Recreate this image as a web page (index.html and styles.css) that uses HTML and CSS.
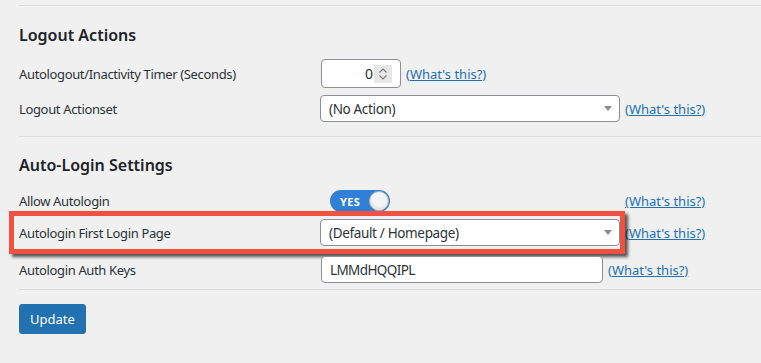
FILE: index.html
```html
<!DOCTYPE html>
<html>
<head>
<meta charset="utf-8">
<link rel="stylesheet" href="styles.css">
</head>
<body>
<div class="wrap">
  <div class="sep sep-top"></div>
  <h2 class="title t1">Logout Actions</h2>
  <div class="row r1">
    <div class="label">Autologout/Inactivity Timer (Seconds)</div>
    <div class="field">
      <div class="num">
        <span class="num-val">0</span>
        <span class="spin">
          <svg width="18" height="18" viewBox="0 0 18 18"><path d="M5.5 7.5 L9 4 L12.5 7.5" fill="none" stroke="#7a7a7a" stroke-width="1.1"/><path d="M5.5 10.5 L9 14 L12.5 10.5" fill="none" stroke="#7a7a7a" stroke-width="1.1"/></svg>
        </span>
      </div>
      <a class="help" href="#">(What's this?)</a>
    </div>
  </div>
  <div class="row r2">
    <div class="label">Logout Actionset</div>
    <div class="field">
      <div class="select">
        <span>(No Action)</span>
        <span class="caret"></span>
      </div>
      <a class="help" href="#">(What's this?)</a>
    </div>
  </div>
  <div class="sep sep-mid"></div>
  <h2 class="title t2">Auto-Login Settings</h2>
  <div class="row r3">
    <div class="label">Allow Autologin</div>
    <div class="field">
      <div class="toggle-box">
        <div class="toggle"><span class="toggle-text">YES</span><span class="knob"></span></div>
      </div>
      <a class="help" href="#">(What's this?)</a>
    </div>
  </div>
  <div class="row r4">
    <div class="label">Autologin First Login Page</div>
    <div class="field">
      <div class="select">
        <span>(Default / Homepage)</span>
        <span class="caret"></span>
      </div>
      <a class="help" href="#">(What's this?)</a>
    </div>
    <div class="highlight"></div>
  </div>
  <div class="row r5">
    <div class="label">Autologin Auth Keys</div>
    <div class="field">
      <div class="text-input">LMMdHQQIPL</div>
      <a class="help" href="#">(What's this?)</a>
    </div>
  </div>
  <div class="sep sep-bot"></div>
  <button class="btn">Update</button>
</div>
</body>
</html>
```
FILE: styles.css
```css
html, body {
  margin: 0;
  padding: 0;
  background: #f0f0f1;
}
body {
  font-family: "Noto Sans", "Open Sans", sans-serif;
  font-size: 13px;
  color: #2c3338;
  overflow: hidden;
}
.wrap {
  padding-left: 19px;
}
.sep {
  border-top: 1px solid #dcdcde;
  height: 0;
}
.sep-top { margin-top: 5px; }
.sep-mid { margin-top: 14px; }
.sep-bot { margin-top: 6px; }
.title {
  margin: 0;
  font-size: 16px;
  font-weight: 600;
  line-height: 22px;
  height: 22px;
  color: #1d2327;
}
.t1 { margin-top: 18px; }
.t2 { margin-top: 17px; }
.row {
  display: flex;
  align-items: center;
  position: relative;
}
.label {
  width: 301px;
  flex: none;
  letter-spacing: -0.35px;
}
.field {
  display: flex;
  align-items: center;
}
.r1 { margin-top: 13px; height: 29px; }
.r2 { margin-top: 7px; height: 27px; }
.r3 { margin-top: 14px; height: 22px; }
.r4 { margin-top: 7px; height: 27px; }
.r5 { margin-top: 10px; height: 27px; }
.help {
  color: #2271b1;
  text-decoration: underline;
  margin-left: 5px;
}
.num {
  box-sizing: border-box;
  width: 80px;
  height: 29px;
  margin-left: 1px;
  background: #fff;
  border: 1px solid #8c8f94;
  border-radius: 4px;
  display: flex;
  align-items: center;
  justify-content: flex-end;
  padding-right: 8px;
}
.num-val {
  font-size: 14px;
  color: #2c3338;
}
.spin {
  width: 18px;
  height: 18px;
  background: #e6e6e6;
  margin-left: 1px;
  display: flex;
}
.select {
  box-sizing: border-box;
  width: 300px;
  height: 27px;
  background: #fff;
  border: 1px solid #8c8f94;
  border-radius: 4px;
  display: flex;
  align-items: center;
  justify-content: space-between;
  padding: 0 7px 0 8px;
  font-size: 13.5px;
  letter-spacing: -0.35px;
  color: #2c3338;
}
.caret {
  width: 0;
  height: 0;
  border-left: 4px solid transparent;
  border-right: 4px solid transparent;
  border-top: 5px solid #8a8a8a;
}
.toggle-box {
  width: 300px;
  padding-left: 10px;
  box-sizing: border-box;
}
.toggle {
  box-sizing: border-box;
  width: 60px;
  height: 22px;
  border-radius: 11px;
  background: #2f80d6;
  display: flex;
  align-items: center;
  justify-content: space-between;
  padding: 0 1px 0 10px;
}
.toggle-text {
  color: #fff;
  font-weight: 700;
  font-size: 11px;
  letter-spacing: 0.3px;
}
.knob {
  box-sizing: border-box;
  width: 20px;
  height: 20px;
  border-radius: 50%;
  background: #f4f4f4;
  border: 1px solid #b5b5b5;
  box-shadow: inset 0 -2px 3px rgba(0,0,0,0.08);
}
.text-input {
  box-sizing: border-box;
  width: 282px;
  height: 27px;
  margin-left: 1px;
  background: #fff;
  border: 1px solid #8c8f94;
  border-radius: 4px;
  display: flex;
  align-items: center;
  padding-left: 8px;
  font-size: 13.5px;
  letter-spacing: -0.6px;
  color: #2c3338;
}
.highlight {
  position: absolute;
  left: -10px;
  top: -8px;
  width: 616px;
  height: 43px;
  box-sizing: border-box;
  border: 5px solid #f25142;
  box-shadow: 3px 3px 3px rgba(0,0,0,0.65);
  pointer-events: none;
}
.btn {
  display: block;
  margin: 14px 0 0 0;
  height: 30px;
  padding: 0 10px;
  background: #2271b1;
  color: #fff;
  border: 1px solid #2271b1;
  border-radius: 3px;
  font-family: inherit;
  font-size: 13px;
  line-height: 28px;
}
```
